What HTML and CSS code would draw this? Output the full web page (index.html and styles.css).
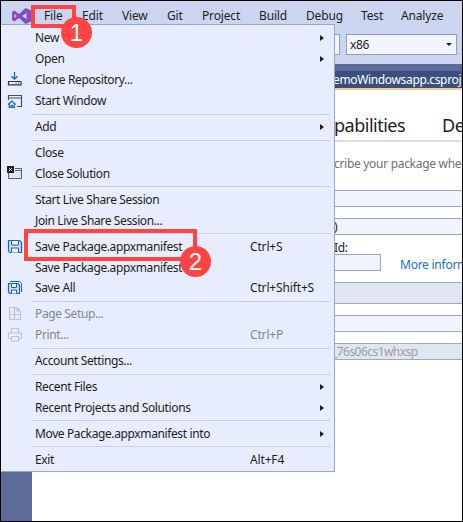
FILE: index.html
```
<!DOCTYPE html>
<html lang="en">
<head>
<meta charset="utf-8">
<title>File menu</title>
<link rel="stylesheet" href="styles.css">
</head>
<body>
<div class="window">
  <header class="menubar">
    <svg class="logo" width="20" height="16" viewBox="0 0 20 16"><path fill="#854cc7" fill-rule="evenodd" d="M0 4 2.400 2.500 7 6 13.500 0 19.500 2.500V13.500L13.500 16 7 10 2.400 13.500 0 12ZM2.500 6V10L4.700 8ZM14.500 5 10 8 14.500 11Z"/></svg>
    <span>File</span><span>Edit</span><span>View</span><span>Git</span><span>Project</span><span>Build</span><span>Debug</span><span>Test</span><span>Analyze</span>
  </header>
  <div class="toolbar">
    <div class="combo config"></div>
    <div class="combo"><span>x86</span><i class="down"></i></div>
  </div>
  <div class="strip"></div>
  <div class="tabs"><span>emoWindowsapp.csproj</span></div>
  <div class="workspace">
    <aside class="rail"></aside>
    <main class="doc">
      <nav class="doc-tabs"><span>pabilities</span><span class="decl">De</span></nav>
      <p class="hint">cribe your package wher</p>
      <div class="field first"></div>
      <div class="field second">)</div>
      <div class="label">Id:</div>
      <div class="id-row"><div class="field small"></div><a>More inform</a></div>
      <div class="field tall"></div>
      <div class="field version"></div>
      <div class="field family">_76s06cs1whxsp</div>
    </main>
  </div>

  <div class="menu">
    <div class="row"><span>New</span><i class="right"></i></div>
    <div class="row"><span>Open</span><i class="right"></i></div>
    <div class="row"><svg width="16" height="16" viewBox="0 0 16 16" fill="none"><path d="M7.500 0V7M4.500 4.200 7.500 7.200 10.500 4.200" stroke="#1766b5" stroke-width="1.300"/><path d="M1.500 9.500H14V12.800H1.500Z" stroke="#343741" stroke-width="1.200"/><path d="M8.500 11.200H9.500M11 11.200H12" stroke="#343741"/></svg><span>Clone Repository...</span></div>
    <div class="row"><svg width="16" height="16" viewBox="0 0 16 16" fill="none"><path d="M1.500 7V2.500H14.500V13.500H10M1.500 5H14.500" stroke="#4c4f59" stroke-width="1.200"/><path d="M1 11.500 4.800 8 8.600 11.500M2.300 10.800V14.500H4V12.500H5.500V14.500H7.300V10.800" stroke="#1766b5" stroke-width="1.200"/></svg><span>Start Window</span></div>
    <hr>
    <div class="row"><span>Add</span><i class="right"></i></div>
    <hr>
    <div class="row"><span>Close</span></div>
    <div class="row"><svg width="16" height="16" viewBox="0 0 16 16" fill="none"><path fill="#e0e4ee" d="M2 4H14V11H2Z"/><path d="M8 2.500H14.500V12.500H1.500V7M8 4.500H14" stroke="#5b5d66"/><path fill="#202126" d="M0 0H7V7H0Z"/><path d="M2.200 2.200 4.800 4.800M4.800 2.200 2.200 4.800" stroke="#fff"/></svg><span>Close Solution</span></div>
    <hr>
    <div class="row"><span>Start Live Share Session</span></div>
    <div class="row"><span>Join Live Share Session...</span></div>
    <hr>
    <div class="row"><svg width="16" height="16" viewBox="0 0 16 16"><path fill="#cfdff5" stroke="#1766b5" stroke-width="1.200" d="M1.500 1.500H12.500L14.500 3.500V13.500H3L1.500 12Z"/><path fill="#edf3ff" stroke="#1766b5" d="M4.500 1.500H11.500V6H4.500ZM4.500 13.500V9H11.500V13.500"/></svg><span>Save Package.appxmanifest</span><kbd>Ctrl+S</kbd></div>
    <div class="row"><span>Save Package.appxmanifest</span></div>
    <div class="row"><svg width="16" height="16" viewBox="0 0 16 16"><path fill="none" stroke="#1766b5" d="M3 1.500H12.500L14.500 3.500V12"/><path fill="#cfdff5" stroke="#1766b5" stroke-width="1.200" d="M1.500 3.500H11L12.500 5V13.500H3L1.500 12Z"/><path fill="#edf3ff" stroke="#1766b5" d="M4.500 3.500H9.500V7.500H4.500ZM4.500 13.500V10H9.500V13.500"/></svg><span>Save All</span><kbd>Ctrl+Shift+S</kbd></div>
    <hr>
    <div class="row off"><svg width="16" height="16" viewBox="0 0 16 16" fill="none" stroke="#bfc3d2" stroke-width="1.200"><path d="M2.500 1.500H10L13.500 5V13.500H2.500ZM7.500 1.500V13.500M2.500 8.500H13.500M10 1.500V5H13.500"/></svg><span>Page Setup...</span></div>
    <div class="row off"><svg width="16" height="16" viewBox="0 0 16 16" fill="none" stroke="#bfc3d2" stroke-width="1.200"><path d="M4.500 6V1.500H11.500V6M4 11.500H1.500V6H14.500V11.500H12M4.500 9.500H11.500V14H4.500Z"/></svg><span>Print...</span><kbd>Ctrl+P</kbd></div>
    <hr>
    <div class="row"><span>Account Settings...</span></div>
    <hr>
    <div class="row"><span>Recent Files</span><i class="right"></i></div>
    <div class="row"><span>Recent Projects and Solutions</span><i class="right"></i></div>
    <hr>
    <div class="row"><span>Move Package.appxmanifest into</span><i class="right"></i></div>
    <hr>
    <div class="row"><span>Exit</span><kbd>Alt+F4</kbd></div>
  </div>

  <div class="mark mark-file"></div>
  <div class="mark mark-save"></div>
  <div class="badge badge-one">1</div>
  <div class="badge badge-two">2</div>
</div>
</body>
</html>
```
FILE: styles.css
```
* { box-sizing: border-box; }
body { margin: 0; font: 12px/16px "Noto Sans", "Open Sans", sans-serif; color: #1e1e1e; }
.window { position: relative; width: 463px; height: 522px; border: 1px solid #000; overflow: hidden; background: #fff; display: flex; flex-direction: column; white-space: nowrap; }
.menubar { height: 23px; flex: none; background: #ccd5f0; display: grid; grid-template-columns: 43px 38px 40px 45px 35px 57px 47px 55px 40px 60px; align-items: center; padding-top: 7px; line-height: 16px; letter-spacing: -0.15px; }
.logo { margin-left: 11px; }
.toolbar { height: 40px; flex: none; background: #ccd5f0; display: flex; padding: 10px 0 0 239px; gap: 6px; }
.combo { width: 111px; height: 21px; border: 1px solid #919fb8; background: #f2f5fd; display: flex; align-items: center; justify-content: space-between; padding: 0 4px 0 3px; letter-spacing: -0.4px; }
.config { width: 100px; }
.down { border: 3px solid transparent; border-top-color: #1e1e1e; border-bottom: 0; }
.strip { height: 7px; flex: none; background: #5d6b99; }
.tabs { height: 19px; flex: none; background: #3b4f81; border-bottom: 2px solid #f5cc84; color: #fff; padding-left: 332px; line-height: 17px; letter-spacing: -0.35px; }
.workspace { flex: 1; display: flex; min-height: 0; }
.rail { width: 31px; flex: none; background: #5d6b99; }
.doc { flex: 1; min-width: 0; padding-left: 302px; overflow: hidden; display: flex; flex-direction: column; letter-spacing: -0.4px; }
.doc-tabs { height: 52px; flex: none; border-bottom: 2px solid #ddd; display: flex; padding-top: 23px; font-size: 18px; line-height: 24px; letter-spacing: -0.5px; }
.decl { margin-left: 37px; }
.hint { margin: 14px 0 18px; color: #717171; line-height: 16px; letter-spacing: -0.3px; }
.field { height: 17px; flex: none; background: #f1f4fd; border: 1px solid #9aa7ba; border-width: 1px 0; line-height: 15px; }
.second { margin-top: 11px; }
.label { height: 19px; line-height: 25px; flex: none; }
.id-row { display: flex; align-items: center; gap: 19px; height: 17px; flex: none; }
.small { width: 47px; flex: none; border-right-width: 1px; }
.id-row a { color: #1670bf; line-height: 16px; padding-top: 4px; letter-spacing: -0.25px; }
.tall { height: 22px; margin-top: 11px; background: #dfe6f1; border-color: #a5a8ae; }
.version { margin-top: 11px; }
.family { margin-top: 11px; background: #dfe6f1; color: #a0a0a0; border-color: #a5a8ae; letter-spacing: -0.55px; text-indent: -2px; }
.menu { position: absolute; left: 0; top: 23px; width: 334px; height: 448px; padding-top: 3px; background: #e7edfd; border: 1px solid #95a6cf; border-left: 0; display: flex; flex-direction: column; letter-spacing: -0.38px; }
.row { height: 20.950px; flex: none; display: grid; grid-template-columns: 34px 215px 69px 6px; align-items: center; }
.row svg { grid-column: 1; grid-row: 1; margin-left: 6px; }
.row span { grid-column: 2; grid-row: 1; }
.row kbd { grid-column: 3; grid-row: 1; font: inherit; letter-spacing: -0.15px; }
.right { grid-column: 4; grid-row: 1; border: 3.500px solid transparent; border-left: 4px solid #1e1e1e; border-right: 0; width: 4px; margin-left: 1px; }
.off { color: #85878e; }
hr { width: 299px; height: 1px; flex: none; margin: 1.930px 0 2px 30px; border: 0; background: #c9d1ee; }
.mark { position: absolute; border: 4px solid #ff4444; }
.mark-file { left: 30px; top: 4px; width: 45px; height: 23px; }
.mark-save { left: 23px; top: 228px; width: 173px; height: 32px; }
.badge { position: absolute; width: 31px; height: 31px; border-radius: 50%; background: #ff4444; color: #fff; font: 24px/31px "Liberation Sans", sans-serif; text-align: center; }
.badge-one { left: 60px; top: 16px; }
.badge-two { left: 179px; top: 245px; }
```
